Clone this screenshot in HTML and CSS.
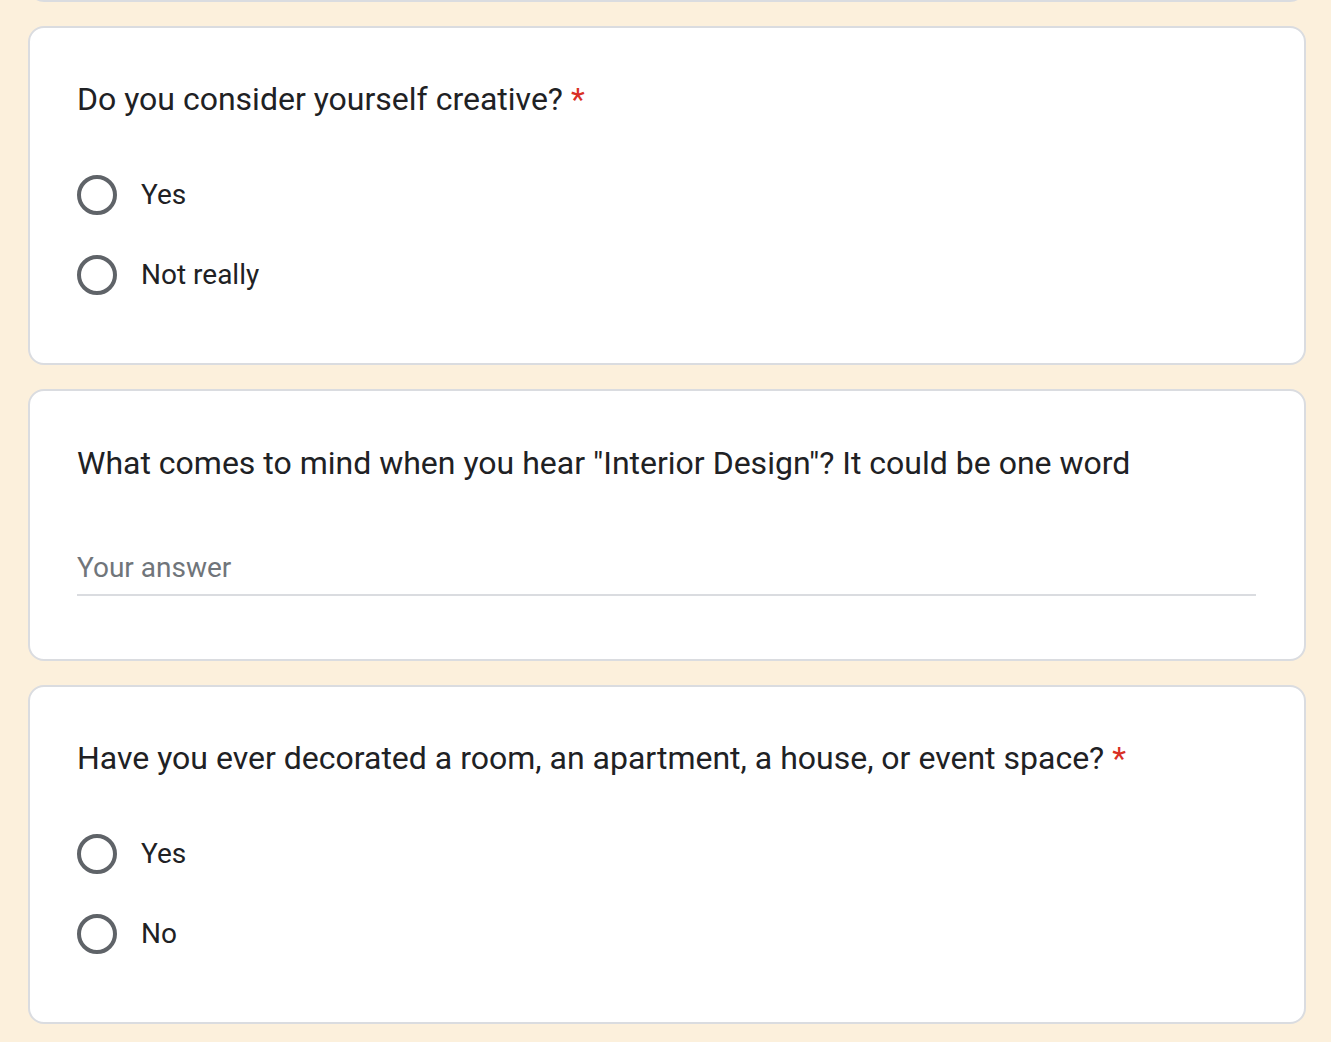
FILE: index.html
```html
<!DOCTYPE html>
<html lang="en">
<head>
<meta charset="utf-8">
<title>Form</title>
<link rel="stylesheet" href="styles.css">
</head>
<body>
<div class="form">
  <div class="card card-prev"></div>

  <div class="card">
    <div class="question">Do you consider yourself creative?<span class="req">*</span></div>
    <div class="options">
      <label class="option"><span class="radio"></span><span class="opt-text">Yes</span></label>
      <label class="option"><span class="radio"></span><span class="opt-text">Not really</span></label>
    </div>
  </div>

  <div class="card card-text">
    <div class="question">What comes to mind when you hear "Interior Design"? It could be one word</div>
    <div class="answer">
      <div class="answer-text">Your answer</div>
    </div>
  </div>

  <div class="card">
    <div class="question">Have you ever decorated a room, an apartment, a house, or event space?<span class="req">*</span></div>
    <div class="options">
      <label class="option"><span class="radio"></span><span class="opt-text">Yes</span></label>
      <label class="option"><span class="radio"></span><span class="opt-text">No</span></label>
    </div>
  </div>
</div>
</body>
</html>
```

FILE: styles.css
```css
html, body {
  margin: 0;
  padding: 0;
}

body {
  background: #fcf0dc;
  font-family: Roboto, "Liberation Sans", Arial, sans-serif;
  color: #202124;
  overflow: hidden;
  height: 1042px;
}

.form {
  display: flex;
  flex-direction: column;
  gap: 24px;
  margin-left: 28px;
  width: 1278px;
}

.card {
  background: #ffffff;
  border: 2px solid #dadce0;
  border-radius: 16px;
  padding: 47px 48px 48px 47px;
}

.card-text {
  padding-top: 48px;
}

.card-prev {
  margin-top: -98px;
  padding: 48px;
  box-sizing: content-box;
  height: 0;
}

.question {
  font-size: 32px;
  line-height: 48px;
  letter-spacing: 0;
}

.req {
  color: #d93025;
  padding-left: 8px;
}

.options {
  margin-top: 32px;
  display: flex;
  flex-direction: column;
}

.option {
  display: flex;
  align-items: center;
  height: 80px;
}

.radio {
  width: 40px;
  height: 40px;
  box-sizing: border-box;
  border: 4px solid #5f6368;
  border-radius: 50%;
  flex: none;
}

.opt-text {
  font-size: 28px;
  margin-left: 24px;
  line-height: 48px;
}

.answer {
  margin-top: 57px;
  margin-bottom: 15px;
  padding-bottom: 2px;
  border-bottom: 2px solid #dadce0;
}

.answer-text {
  font-size: 28px;
  line-height: 48px;
  color: #70757a;
}
```
